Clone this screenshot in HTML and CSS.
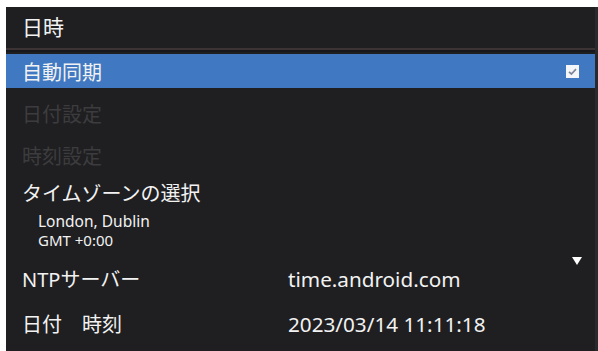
FILE: index.html
```html
<!DOCTYPE html>
<html lang="ja">
<head>
    <meta charset="UTF-8">
    <meta name="viewport" content="width=device-width, initial-scale=1.0">
    <title>日時</title>
    <link rel="stylesheet" href="styles.css">
</head>
<body>
    <div class="screen">
        <div class="title-bar">日時</div>
        <div class="list">
            <div class="row selected">
                <span class="label">自動同期</span>
                <span class="check">
                    <svg viewBox="0 0 13 13" width="13" height="13">
                        <rect x="0" y="0" width="13" height="13" fill="#f4f6fa"/>
                        <path d="M3 6.8 L5.4 9 L10 4.2" fill="none" stroke="#7d8796" stroke-width="1.7"/>
                    </svg>
                </span>
            </div>
            <div class="row disabled"><span class="label">日付設定</span></div>
            <div class="row disabled"><span class="label">時刻設定</span></div>

            <div class="timezone">
                <div class="label">タイムゾーンの選択</div>
                <div class="tz-city">London, Dublin</div>
                <div class="tz-offset">GMT +0:00</div>
                <span class="arrow"></span>
            </div>

            <div class="pair">
                <span class="label">NTPサーバー</span>
                <span class="value">time.android.com</span>
            </div>
            <div class="pair">
                <span class="label">日付　時刻</span>
                <span class="value">2023/03/14 11:11:18</span>
            </div>
        </div>
    </div>
</body>
</html>
```

FILE: styles.css
```css
:root {
    --bg: #1f1f21;
    --blue: #4079c1;
    --text: #f2f2f2;
    --dim: #3c3c3e;
}

* {
    margin: 0;
    padding: 0;
    box-sizing: border-box;
}

body {
    background: #ffffff;
    font-family: "Noto Sans", "Noto Sans CJK JP", sans-serif;
    color: var(--text);
    overflow: hidden;
}

.screen {
    margin: 7px 0 0 6px;
    height: 344px;
    background: var(--bg);
    border-right: 3px solid #2a2a2c;
}

.title-bar {
    height: 43px;
    padding-left: 16px;
    font-size: 21px;
    line-height: 41px;
    border-bottom: 2px solid #3b3334;
    box-shadow: 0 2px 0 #16181c;
}

.list {
    display: flex;
    flex-direction: column;
    padding-top: 4px;
}

.row {
    height: 34px;
    margin-bottom: 8px;
    padding: 0 16px;
    display: flex;
    align-items: center;
    justify-content: space-between;
    font-size: 20px;
}

.selected {
    background: var(--blue);
}

.check {
    display: flex;
}

.disabled {
    color: var(--dim);
}

.timezone {
    position: relative;
    padding: 3px 16px 0;
    height: 76px;
}

.timezone .label {
    font-size: 20px;
    line-height: 22px;
}

.tz-city {
    font-size: 15.5px;
    line-height: 18px;
    padding-left: 16px;
    margin-top: 7px;
}

.tz-offset {
    font-size: 15px;
    line-height: 20px;
    padding-left: 16px;
}

.arrow {
    position: absolute;
    right: 13px;
    top: 77px;
    border-left: 5px solid transparent;
    border-right: 5px solid transparent;
    border-top: 8px solid #ffffff;
}

.pair {
    display: flex;
    align-items: center;
    height: 45px;
    padding-left: 16px;
    font-size: 20px;
}

.pair .label {
    width: 266px;
}

.pair .value {
    font-size: 20.7px;
}
```
